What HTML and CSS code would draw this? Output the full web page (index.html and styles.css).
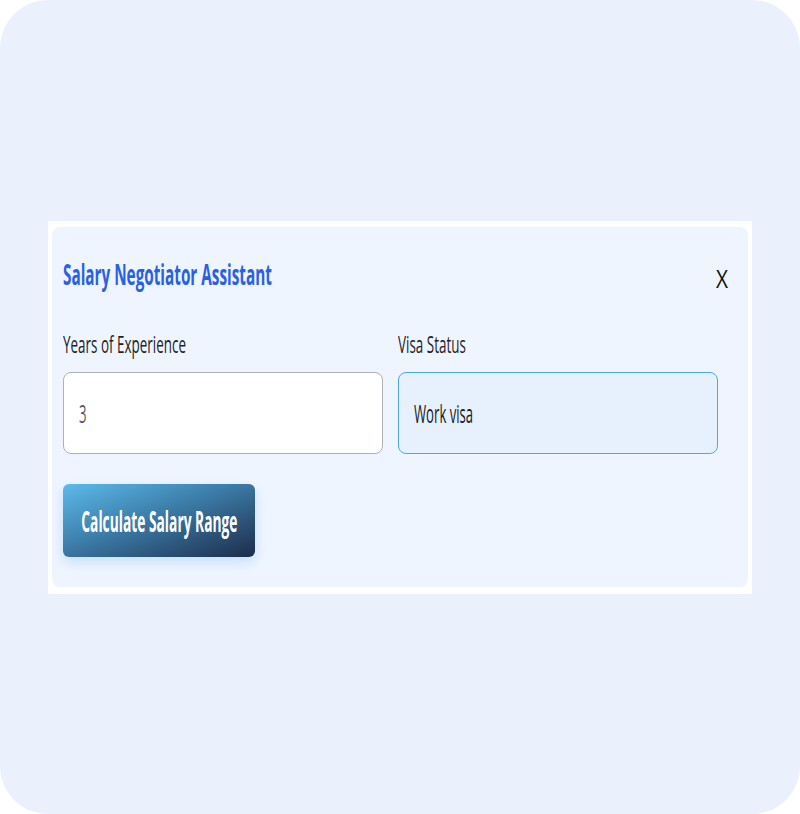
FILE: index.html
```html
<!DOCTYPE html>
<html lang="en">
<head>
<meta charset="utf-8">
<title>Salary Negotiator Assistant</title>
<link rel="stylesheet" href="styles.css">
</head>
<body>
<div class="screen">
  <div class="card">
    <div class="panel">
      <div class="header">
        <h1 class="title"><span class="sq sq-title">Salary Negotiator Assistant</span></h1>
        <button class="close" type="button"><span class="sq sq-x">X</span></button>
      </div>
      <div class="fields">
        <div class="field">
          <label class="label"><span class="sq sq-label">Years of Experience</span></label>
          <div class="input"><span class="sq sq-val muted">3</span></div>
        </div>
        <div class="field">
          <label class="label"><span class="sq sq-label">Visa Status</span></label>
          <div class="input input-focus"><span class="sq sq-val">Work visa</span></div>
        </div>
      </div>
      <button class="calc" type="button"><span class="sq sq-btn">Calculate Salary Range</span></button>
    </div>
  </div>
</div>
</body>
</html>
```
FILE: styles.css
```css
html, body {
  margin: 0;
  padding: 0;
  background: #ffffff;
}
body {
  font-family: "Open Sans", "Noto Sans", sans-serif;
}
.screen {
  width: 800px;
  height: 814px;
  border-radius: 48px;
  background: #eaf1fd;
  display: flex;
  align-items: center;
  justify-content: center;
}
.card {
  width: 704px;
  box-sizing: border-box;
  background: #ffffff;
  padding: 6px 4px 7px 4px;
}
.panel {
  background: #eef5ff;
  border-radius: 8px;
  padding: 31px 20px 30px 11px;
}
.sq {
  display: inline-block;
  white-space: nowrap;
  transform-origin: left center;
}
.header {
  display: flex;
  justify-content: space-between;
  align-items: flex-start;
  height: 32px;
}
.title {
  margin: 0;
  font-size: 28px;
  line-height: 32px;
  font-weight: 700;
  color: #2a60e3;
}
.sq-title { transform: scaleX(0.546); }
.close {
  margin: 4px 0 0 0;
  padding: 0;
  border: 0;
  background: none;
  font-family: inherit;
  font-size: 26px;
  line-height: 32px;
  color: #111111;
  display: flex;
  justify-content: flex-end;
}
.sq-x { transform: scaleX(0.8); transform-origin: right center; }
.fields {
  display: grid;
  grid-template-columns: 320px 320px;
  column-gap: 15px;
  margin-top: 40px;
}
.field {
  display: flex;
  flex-direction: column;
}
.label {
  font-size: 24px;
  line-height: 28px;
  color: #1f1f24;
  margin-bottom: 14px;
}
.sq-label { transform: scaleX(0.56); }
.input {
  height: 82px;
  box-sizing: border-box;
  border: 1px solid #aeb1b6;
  border-radius: 8px;
  background: #ffffff;
  padding: 0 15px;
  display: flex;
  align-items: center;
  font-size: 25px;
  color: #1c1c22;
}
.input-focus {
  border: 1.5px solid #4ea6ee;
  background: #e7f0fd;
}
.muted { color: #595a5e; }
.sq-val { transform: scaleX(0.525); }
.calc {
  margin-top: 30px;
  width: 192px;
  height: 73px;
  border: 0;
  border-radius: 6px;
  padding: 0;
  background: linear-gradient(to bottom right, #5cbbea 0%, #3c7ca8 45%, #1d2c4b 100%);
  box-shadow: 0 5px 12px rgba(92, 170, 230, 0.28);
  display: flex;
  align-items: center;
  justify-content: center;
  font-family: inherit;
  font-size: 29px;
  font-weight: 700;
  color: #ffffff;
}
.sq-btn { transform: scaleX(0.475); transform-origin: center center; flex-shrink: 0; }
```
